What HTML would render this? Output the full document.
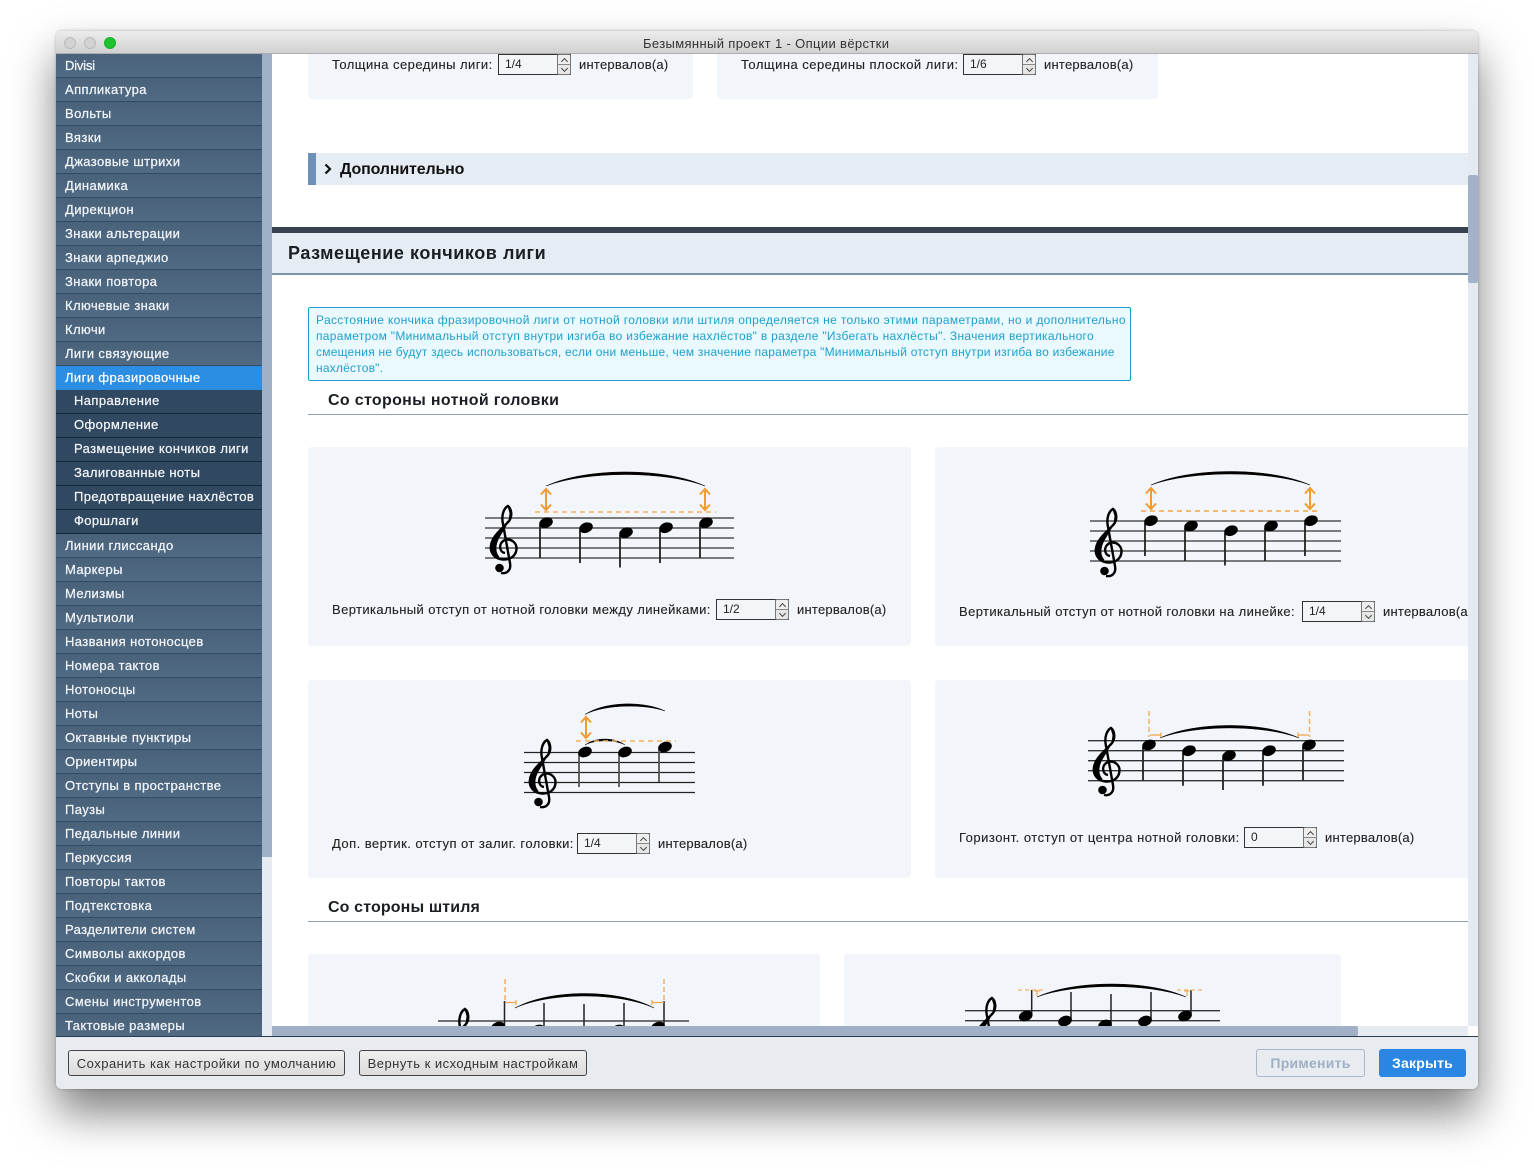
<!DOCTYPE html>
<html lang="ru">
<head>
<meta charset="utf-8">
<title>Опции вёрстки</title>
<style>
html,body{margin:0;padding:0;background:#fff;width:1534px;height:1169px;overflow:hidden}
body{position:relative;font-family:"Liberation Sans","DejaVu Sans",sans-serif;font-size:13px;color:#222}
.a,.t{position:absolute}
.t{white-space:nowrap;line-height:16px;height:16px;-webkit-text-stroke:.12px #222}
#win{position:absolute;left:56px;top:31px;width:1422px;height:1058px;border-radius:6px;background:#fff;box-shadow:0 24px 44px rgba(0,0,0,.5),0 0 3px rgba(0,0,0,.25)}
#bar{position:absolute;left:56px;top:31px;width:1422px;height:22px;border-radius:6px 6px 0 0;background:linear-gradient(#ececec,#d1d1d1);border-bottom:1px solid #adadad}
.dot{position:absolute;top:37px;width:10px;height:10px;border-radius:50%;background:#d3d3d3;border:1px solid #bababa}
#side{position:absolute;left:56px;top:54px;width:206px;height:982px;overflow:hidden;background:#4d667f}
#side div{height:23px;line-height:24px;padding-left:9px;border-bottom:1px solid #2f4a63;color:#f2f5f8;white-space:nowrap;letter-spacing:.4px;-webkit-text-stroke:.25px #f2f5f8;background:linear-gradient(#496179,#516b85)}
#side div.sel{background:#2b8ee2;border-bottom-color:#2b8ee2;color:#fff}
#side div.sub{background:#304860;border-bottom:1px solid #14263a;padding-left:18px;line-height:21px}
#content{position:absolute;left:0;top:0;width:1468px;height:1026px;clip-path:inset(54px 0 0 272px)}
.panel{position:absolute;background:#f2f5fa;border-radius:4px}
.spin{position:absolute;width:72px;height:19px;border:1px solid #333;background:#f3f5f9;border-right:none}
.spin span{position:absolute;left:6px;top:1px;line-height:16px;font-size:12px;color:#222}
.spin i{position:absolute;right:0;top:-1px;width:14px;height:21px;border:1px solid #777;border-radius:2px;box-sizing:border-box;background:linear-gradient(#eee 0 48%,#888 48% 52%,#e6e6e6 52%)}
.spin i:before,.spin i:after{content:"";position:absolute;left:4px;width:4px;height:4px;border-left:1px solid #444;border-top:1px solid #444;transform:rotate(45deg)}
.spin i:before{top:4px}
.spin i:after{top:11px;transform:rotate(225deg)}
.h2{font-weight:700;font-size:16px;color:#1b1f24;-webkit-text-stroke:0}
.u{letter-spacing:.23px}
.info{color:#1f9fcf;font-size:12px;-webkit-text-stroke:0}
.btn{position:absolute;box-sizing:border-box;border-radius:3px;text-align:center;white-space:nowrap}
</style>
</head>
<body>
<div id="win"></div>
<div id="bar"></div>
<div class="dot" style="left:64px"></div>
<div class="dot" style="left:84px"></div>
<div class="dot" style="left:104px;background:#20c22e;border-color:#1cb028"></div>
<div class="t" style="left:643px;top:36px;color:#333;letter-spacing:.36px;-webkit-text-stroke:0">Безымянный проект 1 - Опции вёрстки</div>

<div id="side">
<div style="letter-spacing:-.2px">Divisi</div><div>Аппликатура</div><div>Вольты</div><div>Вязки</div><div>Джазовые штрихи</div><div>Динамика</div><div>Дирекцион</div><div>Знаки альтерации</div><div>Знаки арпеджио</div><div>Знаки повтора</div><div>Ключевые знаки</div><div>Ключи</div><div>Лиги связующие</div>
<div class="sel">Лиги фразировочные</div>
<div class="sub">Направление</div><div class="sub">Оформление</div><div class="sub">Размещение кончиков лиги</div><div class="sub">Залигованные ноты</div><div class="sub">Предотвращение нахлёстов</div><div class="sub">Форшлаги</div>
<div>Линии глиссандо</div><div>Маркеры</div><div>Мелизмы</div><div>Мультиоли</div><div>Названия нотоносцев</div><div>Номера тактов</div><div>Нотоносцы</div><div>Ноты</div><div>Октавные пунктиры</div><div>Ориентиры</div><div>Отступы в пространстве</div><div>Паузы</div><div>Педальные линии</div><div>Перкуссия</div><div>Повторы тактов</div><div>Подтекстовка</div><div>Разделители систем</div><div>Символы аккордов</div><div>Скобки и акколады</div><div>Смены инструментов</div><div>Тактовые размеры</div>
</div>
<div class="a" style="left:262px;top:54px;width:10px;height:803px;background:#a0b1c7"></div>
<div class="a" style="left:262px;top:857px;width:10px;height:179px;background:#e6ebf2"></div>

<div id="content">
  <div class="panel" style="left:308px;top:30px;width:385px;height:69px"></div>
  <div class="panel" style="left:717px;top:30px;width:441px;height:69px"></div>
  <div class="t" style="left:332px;top:57px;letter-spacing:.45px">Толщина середины лиги:</div>
  <div class="spin" style="left:498px;top:54px"><span>1/4</span><i></i></div>
  <div class="t u" style="left:579px;top:57px">интервалов(а)</div>
  <div class="t" style="left:741px;top:57px;letter-spacing:.48px">Толщина середины плоской лиги:</div>
  <div class="spin" style="left:963px;top:54px"><span>1/6</span><i></i></div>
  <div class="t u" style="left:1044px;top:57px">интервалов(а)</div>

  <div class="a" style="left:308px;top:153px;width:1160px;height:32px;background:#e6ecf4"></div>
  <div class="a" style="left:308px;top:153px;width:8px;height:32px;background:#6e90b6"></div>
  <svg class="a" style="left:322px;top:162px" width="12" height="14" viewBox="0 0 12 14"><path d="M3.500 2.500L8 7 3.500 11.500" fill="none" stroke="#111" stroke-width="2.200"/></svg>
  <div class="t h2" style="left:340px;top:162px;color:#111;letter-spacing:-.15px">Дополнительно</div>

  <div class="a" style="left:272px;top:227px;width:1196px;height:6px;background:#36424f"></div>
  <div class="a" style="left:272px;top:233px;width:1196px;height:40px;background:#e6ecf4;border-bottom:2px solid #7f94ac"></div>
  <div class="t" style="left:288px;top:243px;line-height:20px;height:20px;font-size:18px;font-weight:700;color:#1b1f24;letter-spacing:.55px;-webkit-text-stroke:0">Размещение кончиков лиги</div>

  <div class="a" style="left:308px;top:307px;width:821px;height:72px;background:#e9f9fd;border:1px solid #1f9fcf;border-radius:2px"></div>
  <div class="t info" style="left:316px;top:312px;letter-spacing:.34px">Расстояние кончика фразировочной лиги от нотной головки или штиля определяется не только этими параметрами, но и дополнительно</div>
  <div class="t info" style="left:316px;top:328px;letter-spacing:.3px">параметром "Минимальный отступ внутри изгиба во избежание нахлёстов" в разделе "Избегать нахлёсты". Значения вертикального</div>
  <div class="t info" style="left:316px;top:344px;letter-spacing:.22px">смещения не будут здесь использоваться, если они меньше, чем значение параметра "Минимальный отступ внутри изгиба во избежание</div>
  <div class="t info" style="left:316px;top:360px;letter-spacing:.2px">нахлёстов".</div>

  <div class="t h2" style="left:328px;top:393px;letter-spacing:.32px">Со стороны нотной головки</div>
  <div class="a" style="left:308px;top:414px;width:1160px;height:1px;background:#8ba0b3"></div>

  <div class="panel" style="left:308px;top:447px;width:603px;height:199px"></div>
  <div class="panel" style="left:935px;top:447px;width:560px;height:199px"></div>
  <div class="panel" style="left:308px;top:680px;width:603px;height:198px"></div>
  <div class="panel" style="left:935px;top:680px;width:560px;height:198px"></div>

  <div class="t" style="left:332px;top:602px;letter-spacing:.4px">Вертикальный отступ от нотной головки между линейками:</div>
  <div class="spin" style="left:716px;top:599px"><span>1/2</span><i></i></div>
  <div class="t u" style="left:797px;top:602px">интервалов(а)</div>

  <div class="t" style="left:959px;top:604px;letter-spacing:.4px">Вертикальный отступ от нотной головки на линейке:</div>
  <div class="spin" style="left:1302px;top:601px"><span>1/4</span><i></i></div>
  <div class="t u" style="left:1383px;top:604px">интервалов(а)</div>

  <div class="t" style="left:332px;top:836px;letter-spacing:.45px">Доп. вертик. отступ от залиг. головки:</div>
  <div class="spin" style="left:577px;top:833px"><span>1/4</span><i></i></div>
  <div class="t u" style="left:658px;top:836px">интервалов(а)</div>

  <div class="t" style="left:959px;top:830px;letter-spacing:.5px">Горизонт. отступ от центра нотной головки:</div>
  <div class="spin" style="left:1244px;top:827px"><span>0</span><i></i></div>
  <div class="t u" style="left:1325px;top:830px">интервалов(а)</div>

  <div class="t h2" style="left:328px;top:900px;letter-spacing:.13px">Со стороны штиля</div>
  <div class="a" style="left:308px;top:921px;width:1160px;height:1px;background:#8ba0b3"></div>

  <div class="panel" style="left:308px;top:954px;width:512px;height:90px"></div>
  <div class="panel" style="left:844px;top:954px;width:497px;height:90px"></div>

  <svg class="a" style="left:0;top:0" width="1468" height="1026" viewBox="0 0 1468 1026">
    <defs>
      <g id="clef">
        <path d="M15 48C9 47 8 38 15 35C21 33 27 38 26.500 44C26 51 20 55 13 54.500C5 54 0 48 .9 41C2 31 12 24 19 16C22 12 22 4 18 1C14 3 11 10 13 19L20 58C21.500 66 16 69 11 68" fill="none" stroke="#000" stroke-width="2.400"/>
        <path d="M1 38C4 30 13 24 18 16C15 25 7 32 6 41C5.500 46 7 50 9 52C3 50-.5 44 1 38ZM18 1C23 5 23 12 19 17L20 8Z" fill="#000" stroke="#000" stroke-width="1"/>
        <circle cx="9.500" cy="63" r="4.300" fill="#000"/>
      </g>
      <ellipse id="nh" rx="7" ry="5.100" transform="rotate(-20)" fill="#000"/>
    </defs>

    <!-- Panel 1 -->
    <g stroke="#333" stroke-width="1.300"><path d="M485 518H734M485 528H734M485 538H734M485 548H734M485 558H734"/></g>
    <use href="#clef" x="490" y="505"/>
    <g stroke="#222" stroke-width="1.800"><path d="M540 525V558M580 530V563M620 535V567.500M660 530V563M700 525V558"/></g>
    <use href="#nh" x="546" y="522.700"/><use href="#nh" x="586" y="527.700"/><use href="#nh" x="626" y="532.700"/><use href="#nh" x="666" y="527.700"/><use href="#nh" x="706" y="522.700"/>
    <path d="M546 486C586 467.300 665 467.300 705 486C665 470.700 586 470.700 546 486Z" fill="#000" stroke="#000" stroke-width=".5"/>
    <path d="M535 512H716" stroke="#f5b261" stroke-width="1.500" stroke-dasharray="5 4"/>
    <path d="M546 489V510M541 494.500L546 489 551 494.500M541 504.500L546 510 551 504.500M705 489V510M700 494.500L705 489 710 494.500M700 504.500L705 510 710 504.500" fill="none" stroke="#f29b30" stroke-width="2"/>

    <!-- Panel 2 -->
    <g stroke="#333" stroke-width="1.300"><path d="M1090 521H1341M1090 531H1341M1090 541H1341M1090 551H1341M1090 561H1341"/></g>
    <use href="#clef" x="1095" y="508"/>
    <g stroke="#222" stroke-width="1.800"><path d="M1145 523V556M1185 528V561M1225 533V565.500M1265 528V561M1305 523V556"/></g>
    <use href="#nh" x="1151" y="520.700"/><use href="#nh" x="1191" y="526"/><use href="#nh" x="1231" y="530.700"/><use href="#nh" x="1271" y="526"/><use href="#nh" x="1311" y="520.700"/>
    <path d="M1151 485C1191 467 1270 467 1310 485C1270 470.300 1191 470.300 1151 485Z" fill="#000" stroke="#000" stroke-width=".5"/>
    <path d="M1141 511H1320" stroke="#f3a445" stroke-width="1.500" stroke-dasharray="5 4"/>
    <path d="M1151 488V509M1146 493.500L1151 488 1156 493.500M1146 503.500L1151 509 1156 503.500M1310 488V509M1305 493.500L1310 488 1315 493.500M1305 503.500L1310 509 1315 503.500" fill="none" stroke="#f29b30" stroke-width="2"/>

    <!-- Panel 3 -->
    <g stroke="#222" stroke-width="1.300"><path d="M524 752.500H695M524 762.500H695M524 772.500H695M524 782.500H695M524 792.500H695"/></g>
    <use href="#clef" x="529" y="739"/>
    <g stroke="#555" stroke-width="1.800"><path d="M579 754V787M619 754V787M659 749V782"/></g>
    <use href="#nh" x="585" y="752"/><use href="#nh" x="625" y="752"/><use href="#nh" x="665" y="747"/>
    <path d="M585 714.500C605 701 645 701 665 711C645 704 605 704 585 714.500Z" fill="#000" stroke="#000" stroke-width=".5"/>
    <path d="M585 745C595 737 615 737 625 745C615 739.500 595 739.500 585 745Z" fill="#000" stroke="#000" stroke-width=".4"/>
    <path d="M576 741H676" stroke="#f5b261" stroke-width="1.500" stroke-dasharray="5 4"/>
    <path d="M586 717V738M581 722.500L586 717 591 722.500M581 732.500L586 738 591 732.500" fill="none" stroke="#f29b30" stroke-width="2"/>

    <!-- Panel 4 -->
    <g stroke="#333" stroke-width="1.300"><path d="M1088 740.700H1344M1088 750.700H1344M1088 760.700H1344M1088 770.700H1344M1088 780.700H1344"/></g>
    <use href="#clef" x="1093" y="727"/>
    <g stroke="#222" stroke-width="1.800"><path d="M1143 747V780.700M1183 753V785.700M1223 758V790M1263 753V785.700M1303 747V780.700"/></g>
    <use href="#nh" x="1149" y="745"/><use href="#nh" x="1189" y="750.700"/><use href="#nh" x="1229" y="755.700"/><use href="#nh" x="1269" y="750.700"/><use href="#nh" x="1309" y="745"/>
    <path d="M1160 738C1195 721.300 1264 721.300 1299 738C1264 724.600 1195 724.600 1160 738Z" fill="#000" stroke="#000" stroke-width=".5"/>
    <path d="M1149 711V737M1309.500 711V737" stroke="#f3b06a" stroke-width="1.500" stroke-dasharray="5 3"/>
    <path d="M1150 735H1161M1161 732.500V737.500M1298 735H1309M1298 732.500V737.500" stroke="#f3a445" stroke-width="1.200" fill="none"/>

    <!-- Panel 5 -->
    <path d="M438 1021H689" stroke="#444" stroke-width="1.400"/>
    <use href="#clef" x="447" y="1008"/>
    <g stroke="#222" stroke-width="1.500"><path d="M504.500 1001V1026M544 1003V1026M584 1004V1026M624 1003V1026M664 1001V1026"/></g>
    <use href="#nh" x="498" y="1027"/><use href="#nh" x="538" y="1030"/><use href="#nh" x="578" y="1036"/><use href="#nh" x="618" y="1030"/><use href="#nh" x="658" y="1027"/>
    <path d="M515 1008C550 988.700 619 988.700 654 1008C619 992 550 992 515 1008Z" fill="#000" stroke="#000" stroke-width=".5"/>
    <path d="M505 979V1001M664 979V1001" stroke="#f3b06a" stroke-width="1.500" stroke-dasharray="5 3"/>
    <path d="M505 1002.500H516M516 1000V1005M652 1002.500H664M652 1000V1005" stroke="#f3a445" stroke-width="1.200" fill="none"/>

    <!-- Panel 6 -->
    <path d="M965 1010.700H1220M965 1020.700H1220M965 1030.700H1220" stroke="#333" stroke-width="1.300"/>
    <use href="#clef" x="974" y="997"/>
    <g stroke="#222" stroke-width="1.500"><path d="M1031.700 990V1016M1071 992V1021M1111 994V1026M1151 992V1021M1191 990V1016"/></g>
    <use href="#nh" x="1025.700" y="1016"/><use href="#nh" x="1065" y="1021"/><use href="#nh" x="1105" y="1025"/><use href="#nh" x="1145" y="1021"/><use href="#nh" x="1185" y="1016"/>
    <path d="M1037 997C1074 979.700 1149 979.700 1186 997C1149 983 1074 983 1037 997Z" fill="#000" stroke="#000" stroke-width=".5"/>
    <path d="M1018 990H1046M1177 990H1205" stroke="#f3b06a" stroke-width="1.300" stroke-dasharray="4 3"/>
    <path d="M1037 990V996M1034.500 991H1039.500M1187 990V996M1184.500 991H1189.500" stroke="#f3a445" stroke-width="1.100" fill="none"/>
  </svg>
</div>

<!-- scrollbars -->
<div class="a" style="left:272px;top:1026px;width:1196px;height:10px;background:#e6ebf2"></div>
<div class="a" style="left:272px;top:1026px;width:1086px;height:10px;background:#a0b1c7;border-radius:0 2px 2px 0"></div>
<div class="a" style="left:1468px;top:54px;width:10px;height:972px;background:#e5eaf2"></div>
<div class="a" style="left:1468px;top:175px;width:10px;height:108px;background:#a2b3c9;border-radius:2px"></div>
<div class="a" style="left:1468px;top:1026px;width:10px;height:10px;background:#fff"></div>

<!-- footer -->
<div class="a" style="left:56px;top:1036px;width:1422px;height:53px;box-sizing:border-box;background:#e8ebf0;border-top:1px solid #2c3b4a;border-radius:0 0 6px 6px"></div>
<div class="btn" style="left:68px;top:1050px;width:277px;height:26px;line-height:25px;border:1px solid #444;background:linear-gradient(#efefef,#dcdcdc);color:#333;letter-spacing:.5px">Сохранить как настройки по умолчанию</div>
<div class="btn" style="left:359px;top:1050px;width:228px;height:26px;line-height:25px;border:1px solid #444;background:linear-gradient(#efefef,#dcdcdc);color:#333;letter-spacing:.48px">Вернуть к исходным настройкам</div>
<div class="btn" style="left:1256px;top:1049px;width:109px;height:28px;line-height:26px;border:1px solid #a9b8ca;background:#e8ebf0;color:#9fb0c6;font-weight:700;font-size:14px;letter-spacing:.25px">Применить</div>
<div class="btn" style="left:1379px;top:1049px;width:87px;height:28px;line-height:28px;background:#2b86e3;color:#fff;font-weight:700;font-size:14px;letter-spacing:.2px">Закрыть</div>
</body>
</html>
